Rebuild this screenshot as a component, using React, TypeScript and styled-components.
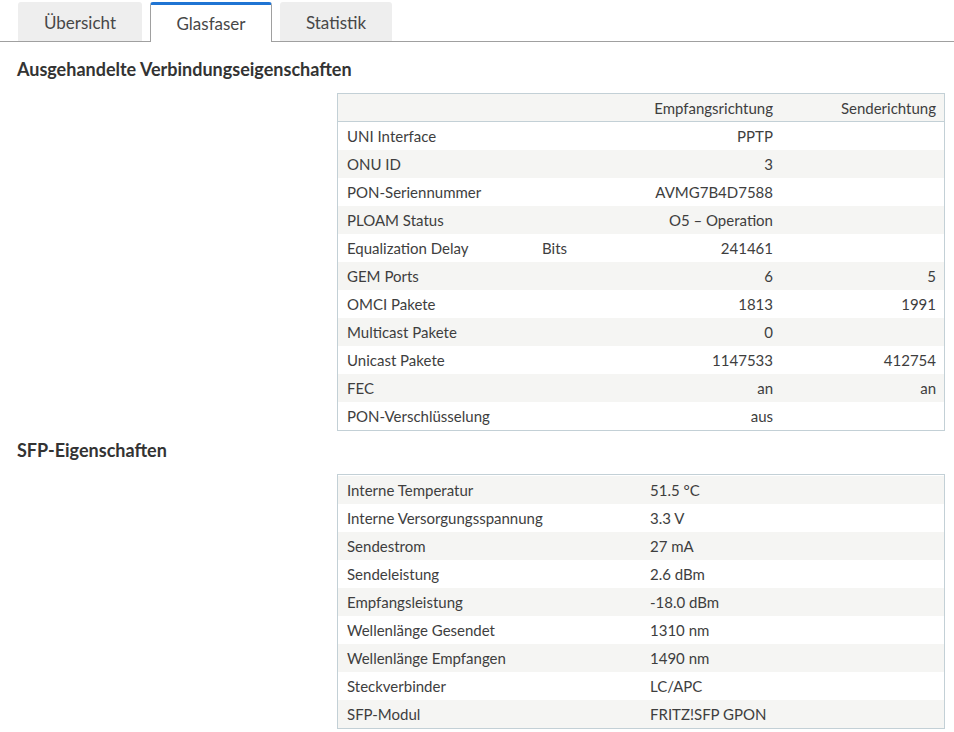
import React from "react";
import styled, { createGlobalStyle } from "styled-components";

const GlobalStyle = createGlobalStyle`
    body {
        margin: 0;
        background: #ffffff;
        font-family: Lato, "Liberation Sans", sans-serif;
        color: #3e3e3e;
    }
`;

type rowTypes = {
    label: string;
    unit?: string;
    rx?: string;
    tx?: string;
};

const connectionRows: rowTypes[] = [
    { label: "UNI Interface", rx: "PPTP" },
    { label: "ONU ID", rx: "3" },
    { label: "PON-Seriennummer", rx: "AVMG7B4D7588" },
    { label: "PLOAM Status", rx: "O5 – Operation" },
    { label: "Equalization Delay", unit: "Bits", rx: "241461" },
    { label: "GEM Ports", rx: "6", tx: "5" },
    { label: "OMCI Pakete", rx: "1813", tx: "1991" },
    { label: "Multicast Pakete", rx: "0" },
    { label: "Unicast Pakete", rx: "1147533", tx: "412754" },
    { label: "FEC", rx: "an", tx: "an" },
    { label: "PON-Verschlüsselung", rx: "aus" },
];

const sfpRows = [
    ["Interne Temperatur", "51.5 °C"],
    ["Interne Versorgungsspannung", "3.3 V"],
    ["Sendestrom", "27 mA"],
    ["Sendeleistung", "2.6 dBm"],
    ["Empfangsleistung", "-18.0 dBm"],
    ["Wellenlänge Gesendet", "1310 nm"],
    ["Wellenlänge Empfangen", "1490 nm"],
    ["Steckverbinder", "LC/APC"],
    ["SFP-Modul", "FRITZ!SFP GPON"],
];

const tabs = [
    { name: "Übersicht", width: 124 },
    { name: "Glasfaser", width: 122, active: true },
    { name: "Statistik", width: 112 },
];

const App = () => {
    return (
        <Page>
            <GlobalStyle />
            <TabBar>
                {tabs.map((tab) => (
                    <Tab key={tab.name} $active={!!tab.active} $width={tab.width}>
                        {tab.name}
                    </Tab>
                ))}
            </TabBar>
            <Content>
                <SectionTitle>Ausgehandelte Verbindungseigenschaften</SectionTitle>
                <TableBox>
                    <ConnRow $shaded>
                        <Cell />
                        <Cell />
                        <NumCell>Empfangsrichtung</NumCell>
                        <NumCell>Senderichtung</NumCell>
                    </ConnRow>
                    <HeadDivider />
                    {connectionRows.map((row, index) => (
                        <ConnRow key={row.label} $shaded={index % 2 === 1}>
                            <Cell>{row.label}</Cell>
                            <Cell>{row.unit}</Cell>
                            <NumCell>{row.rx}</NumCell>
                            <NumCell>{row.tx}</NumCell>
                        </ConnRow>
                    ))}
                </TableBox>
                <SectionTitle>SFP-Eigenschaften</SectionTitle>
                <TableBox $topGap>
                    {sfpRows.map(([label, value], index) => (
                        <SfpRow key={label} $shaded={index % 2 === 0}>
                            <Cell>{label}</Cell>
                            <Cell>{value}</Cell>
                        </SfpRow>
                    ))}
                </TableBox>
            </Content>
        </Page>
    );
};

export default App;

const Page = styled.div`
    width: 954px;
    min-height: 732px;
`;

const TabBar = styled.div`
    display: flex;
    align-items: flex-end;
    gap: 8px;
    height: 41px;
    padding-left: 18px;
    border-bottom: 1px solid #a0a0a0;
`;

const Tab = styled.div<{ $active: boolean; $width: number }>`
    box-sizing: border-box;
    width: ${(props) => props.$width}px;
    height: ${(props) => (props.$active ? "40px" : "39px")};
    margin-bottom: ${(props) => (props.$active ? "-1px" : "0")};
    display: flex;
    align-items: center;
    justify-content: center;
    font-size: 17px;
    color: #474747;
    border-radius: 3px 3px 0 0;
    background: ${(props) => (props.$active ? "#ffffff" : "#eeeeee")};
    border: ${(props) => (props.$active ? "1px solid #a0a0a0" : "none")};
    border-top: ${(props) => (props.$active ? "3px solid #1f74d3" : "none")};
    border-bottom: none;
    padding-top: ${(props) => (props.$active ? "0" : "2px")};
`;

const Content = styled.div`
    padding: 15px 9px 0 17px;
`;

const SectionTitle = styled.h2`
    margin: 0 0 12px;
    font-size: 18px;
    line-height: 24px;
    font-weight: 700;
    color: #333333;
`;

const TableBox = styled.div<{ $topGap?: boolean }>`
    margin: 0 0 7px 320px;
    border: 1px solid #c3d0d6;
    padding-top: ${(props) => (props.$topGap ? "1px" : "0")};
`;

const ConnRow = styled.div<{ $shaded?: boolean }>`
    display: grid;
    grid-template-columns: 195px 100px 149px 163px;
    height: 28px;
    align-items: center;
    background: ${(props) => (props.$shaded ? "#f5f5f3" : "#ffffff")};
`;

const SfpRow = styled(ConnRow)`
    grid-template-columns: 303px 1fr;
`;

const HeadDivider = styled.div`
    height: 1px;
    margin-top: -1px;
    background: #c3d0d6;
`;

const Cell = styled.div`
    padding: 0 9px;
    font-size: 15px;
    white-space: nowrap;
`;

const NumCell = styled(Cell)`
    text-align: right;
`;
